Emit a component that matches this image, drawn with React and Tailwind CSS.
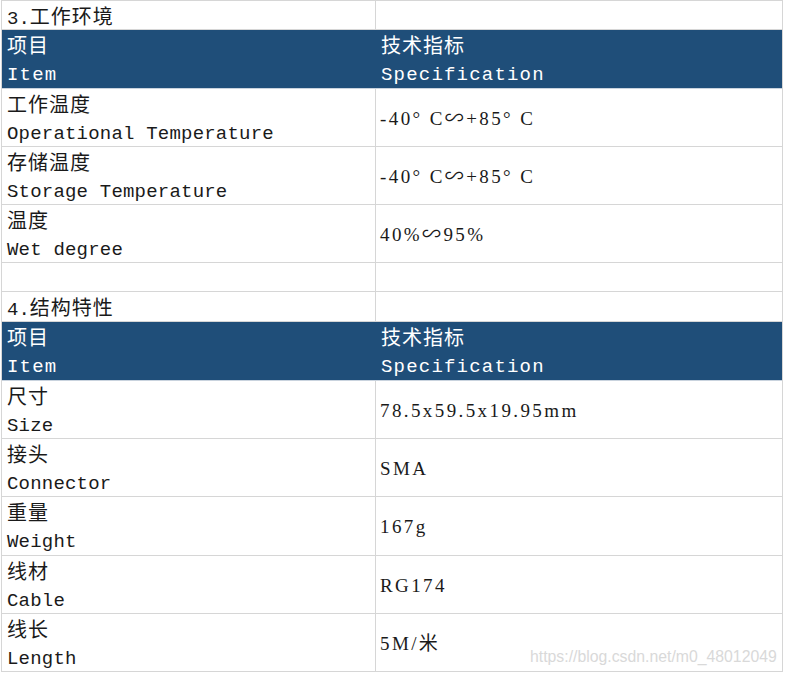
import React from "react";

// two-line label: chinese on top, english below
const Label = ({ cn, en, light }) => (
  <div className={`pl-[5px] ${light ? "text-white" : "text-[#1a1a1a]"}`}>
    <div className="h-[29px] leading-[29px] text-[20px] font-['Noto_Sans_CJK_SC',sans-serif] tracking-[1px]">
      {cn}
    </div>
    <div
      className={`h-[29px] leading-[32px] text-[19px] font-['Liberation_Mono',monospace] ${
        light ? "tracking-[1.2px]" : "tracking-[0.2px]"
      }`}
    >
      {en}
    </div>
  </div>
);

const Title = ({ num, cn, h }) => (
  <div className={`flex ${h} border-b border-[#d6d6d6]`}>
    <div className="w-[374px] border-r border-[#d6d6d6] pl-[5px] leading-[29px] text-[#1a1a1a]">
      <span className="text-[19px] font-['Liberation_Mono',monospace]">{num}</span>
      <span className="text-[20px] font-['Noto_Sans_CJK_SC',sans-serif] tracking-[1px]">{cn}</span>
    </div>
    <div className="flex-1" />
  </div>
);

const Header = () => (
  <div className="flex h-[59px] bg-[#1f4e79] border-b border-[#c9d3de]">
    <div className="w-[374px]">
      <Label cn="项目" en="Item" light />
    </div>
    <div className="flex-1">
      <Label cn="技术指标" en="Specification" light />
    </div>
  </div>
);

const Row = ({ cn, en, value, h = "h-[58px]" }) => (
  <div className={`flex ${h} border-b border-[#d6d6d6]`}>
    <div className="w-[374px] border-r border-[#d6d6d6]">
      <Label cn={cn} en={en} />
    </div>
    <div className="flex-1 flex items-center pl-[4px] pt-[3px] text-[19px] text-[#1a1a1a] tracking-[2.4px] font-['Liberation_Serif','Noto_Sans_CJK_SC',serif]">
      {value}
    </div>
  </div>
);

const env = [
  { cn: "工作温度", en: "Operational Temperature", value: "-40°  C∽+85°  C" },
  { cn: "存储温度", en: "Storage Temperature", value: "-40°  C∽+85°  C" },
  { cn: "温度", en: "Wet degree", value: "40%∽95%" },
];

const build = [
  { cn: "尺寸", en: "Size", value: "78.5x59.5x19.95mm" },
  { cn: "接头", en: "Connector", value: "SMA" },
  { cn: "重量", en: "Weight", value: "167g", h: "h-[59px]" },
  { cn: "线材", en: "Cable", value: "RG174" },
  { cn: "线长", en: "Length", value: "5M/米" },
];

export default function App() {
  return (
    <div className="relative w-[786px] h-[674px] bg-white overflow-hidden">
      <div className="ml-px w-[782px] border-t border-l border-r border-[#d6d6d6]">
        <Title num="3." cn="工作环境" h="h-[29px]" />
        <Header />
        {env.map((r) => (
          <Row key={r.en} {...r} />
        ))}
        <div className="flex h-[29px] border-b border-[#d6d6d6]">
          <div className="w-[374px] border-r border-[#d6d6d6]" />
          <div className="flex-1" />
        </div>
        <Title num="4." cn="结构特性" h="h-[30px]" />
        <Header />
        {build.map((r) => (
          <Row key={r.en} {...r} />
        ))}
      </div>

      {/* csdn watermark */}
      <div className="absolute left-[530px] top-[645px] text-[15.8px] text-[#d9d9d9] font-['Liberation_Sans',sans-serif]">
        https://blog.csdn.net/m0_48012049
      </div>
    </div>
  );
}
